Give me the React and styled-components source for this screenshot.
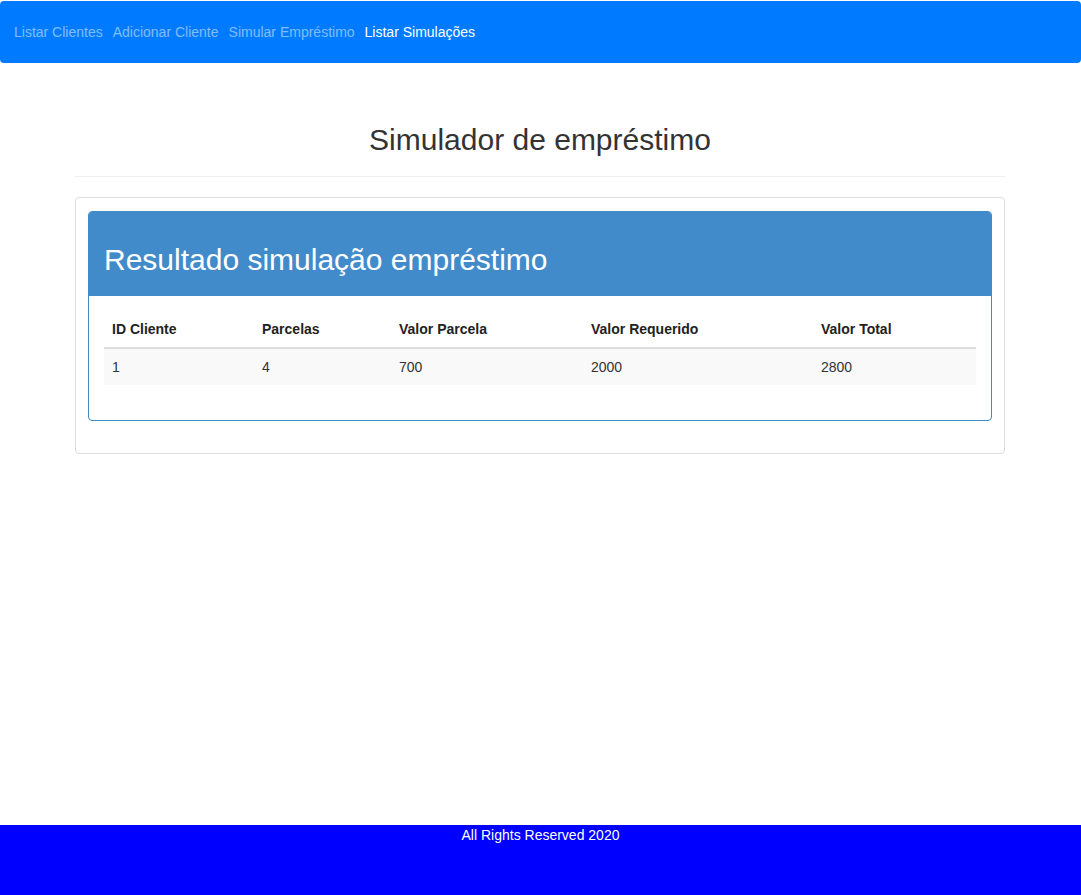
import React from 'react';
import styled, { createGlobalStyle } from 'styled-components';

const GlobalStyle = createGlobalStyle`
  html, body {
    margin: 0;
    padding: 0;
  }

  body {
    font-family: "Liberation Sans", Arial, Helvetica, sans-serif;
    font-size: 14px;
    line-height: 20px;
    color: #333;
    background: #fff;
  }
`;

const Page = styled.div`
  min-height: 100vh;

  display: flex;
  flex-direction: column;
`;

const Navbar = styled.nav`
  margin-top: 1px;
  height: 62px;
  padding: 0 14px;

  background-color: #007bff;
  border-radius: 4px;

  display: flex;
  align-items: center;
  gap: 10px;
`;

const NavLink = styled.a`
  font-size: 14px;
  line-height: 20px;
  text-decoration: none;
  color: ${(props) => (props.active ? '#fff' : 'rgba(255, 255, 255, 0.5)')};
  cursor: pointer;
`;

const Container = styled.main`
  padding: 0 76px 0 75px;
`;

const PageHeader = styled.div`
  margin-top: 60px;
  padding-bottom: 9px;
  border-bottom: 1px solid #eee;
`;

const Title = styled.h2`
  margin: 0 0 11px;

  font-size: 30px;
  line-height: 33px;
  font-weight: 400;
  text-align: center;
  color: #333;
`;

const Well = styled.div`
  margin-top: 20px;
  padding: 13px 12px 32px;

  border: 1px solid #ddd;
  border-radius: 4px;
`;

const Panel = styled.section`
  border: 1px solid #428bca;
  border-radius: 4px;
  overflow: hidden;
`;

const PanelHeading = styled.div`
  padding: 31px 15px 20px;
  background-color: #428bca;
  color: #fff;
`;

const PanelTitle = styled.h2`
  margin: 0;
  font-size: 30px;
  line-height: 33px;
  font-weight: 400;
`;

const PanelBody = styled.div`
  padding: 15px;
`;

const Table = styled.table`
  width: 100%;
  margin-bottom: 20px;
  table-layout: fixed;
  border-collapse: collapse;
  border-spacing: 0;
`;

const Th = styled.th`
  box-sizing: border-box;
  width: ${(props) => (props.width ? `${props.width}px` : 'auto')};
  padding: 8px;

  text-align: left;
  font-weight: 700;
  line-height: 20px;
  color: #222;

  border-bottom: 2px solid #ddd;
`;

const Row = styled.tr`
  background-color: ${(props) => (props.striped ? '#f9f9f9' : '#fff')};
`;

const Td = styled.td`
  padding: 8px;
  line-height: 20px;
  color: #333;
`;

const Footer = styled.footer`
  margin-top: auto;
  height: 70px;

  background-color: #0000ff;
  color: #fff;

  text-align: center;
  font-size: 14px;
  line-height: 20px;
`;

const links = [
  { label: 'Listar Clientes' },
  { label: 'Adicionar Cliente' },
  { label: 'Simular Empréstimo' },
  { label: 'Listar Simulações', active: true },
];

const columns = [
  { label: 'ID Cliente', width: 150 },
  { label: 'Parcelas', width: 137 },
  { label: 'Valor Parcela', width: 192 },
  { label: 'Valor Requerido', width: 230 },
  { label: 'Valor Total' },
];

const simulations = [{ id: 1, parcelas: 4, valorParcela: 700, valorRequerido: 2000, valorTotal: 2800 }];

const App = () => {
  return (
    <Page>
      <GlobalStyle />
      <Navbar>
        {links.map((link) => (
          <NavLink key={link.label} active={link.active ? 1 : 0}>
            {link.label}
          </NavLink>
        ))}
      </Navbar>

      <Container>
        <PageHeader>
          <Title>Simulador de empréstimo</Title>
        </PageHeader>

        <Well>
          <Panel>
            <PanelHeading>
              <PanelTitle>Resultado simulação empréstimo</PanelTitle>
            </PanelHeading>
            <PanelBody>
              <Table>
                <thead>
                  <tr>
                    {columns.map((col) => (
                      <Th key={col.label} width={col.width}>
                        {col.label}
                      </Th>
                    ))}
                  </tr>
                </thead>
                <tbody>
                  {simulations.map((s, i) => (
                    <Row key={s.id} striped={i % 2 === 0 ? 1 : 0}>
                      <Td>{s.id}</Td>
                      <Td>{s.parcelas}</Td>
                      <Td>{s.valorParcela}</Td>
                      <Td>{s.valorRequerido}</Td>
                      <Td>{s.valorTotal}</Td>
                    </Row>
                  ))}
                </tbody>
              </Table>
            </PanelBody>
          </Panel>
        </Well>
      </Container>

      <Footer>All Rights Reserved 2020</Footer>
    </Page>
  );
};

export default App;
